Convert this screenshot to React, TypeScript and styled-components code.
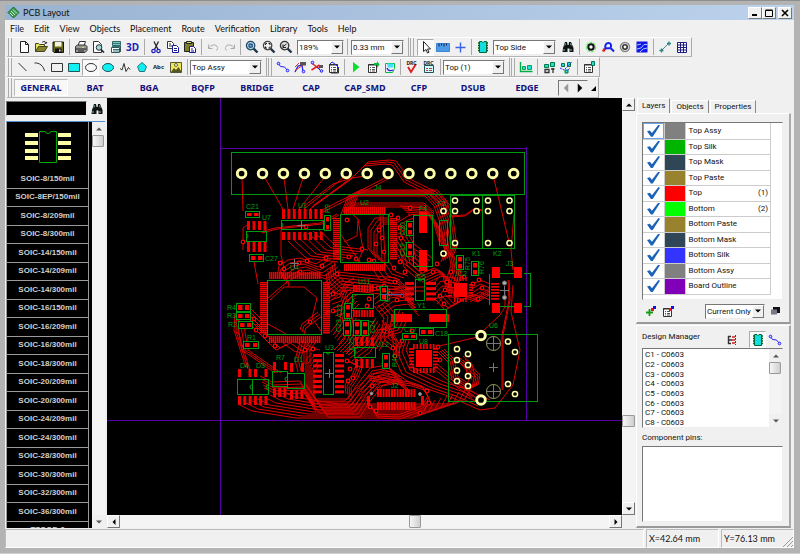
import React from 'react';
import styled, { createGlobalStyle, css } from 'styled-components';

const Global = createGlobalStyle`
  * { box-sizing: border-box; }
  html, body { margin: 0; padding: 0; }
  body { background: #b2b3b2; }
  button, input, select { font: inherit; color: inherit; margin: 0; }
`;

const UI = `Roboto, "Liberation Sans", sans-serif`;
const CHROME = `Lato, "Open Sans", sans-serif`;
const HEAVY = `"Noto Sans", "Open Sans", sans-serif`;

/* ---------- frame ---------- */

const Frame = styled.div`
  display: flex;
  flex-direction: column;
  height: 100vh;
  padding: 4px 6px 5px 5px;
  background: #b2b3b2;
  border-top: 1px solid #8e8e8e;
  border-bottom: 1px solid #d0d0d0;
  font: 8px/12px ${UI};
  color: #111;
`;
const TitleBar = styled.header`
  display: flex;
  align-items: center;
  flex: none;
  height: 15px;
  padding: 0 2px 0 2px;
  background: linear-gradient(90deg, #99b3d2, #bcd2ec);
`;
const Title = styled.h1`
  flex: 1;
  margin: 0 0 0 3px;
  font: 9px/14px ${CHROME};
`;
const raised = css`
  background: #f0f0f0;
  border: 1px solid;
  border-color: #fff #777 #777 #fff;
`;
const sunken = css`
  border: 1px solid;
  border-color: #777 #eee #eee #777;
`;
const CaptionButton = styled.button<{ $gap?: boolean }>`
  ${raised}
  display: grid;
  place-items: center;
  width: 14px;
  height: 12px;
  padding: 0;
  margin-left: ${p => (p.$gap ? 2 : 0)}px;
`;
const Client = styled.div`
  display: flex;
  flex-direction: column;
  flex: 1;
  min-height: 0;
  background: #f0f0f0;
`;
const MenuBar = styled.nav`
  display: flex;
  gap: 10px;
  height: 17px;
  flex: none;
  padding-left: 5px;
`;
const MenuItem = styled.button`
  border: 0;
  padding: 0;
  background: none;
  font: 9px/15px ${CHROME};
`;

/* ---------- toolbars ---------- */

const BarRow = styled.div<{ $h?: number }>`
  display: flex;
  flex: none;
  height: ${p => p.$h ?? 20}px;
  padding-left: 2px;
`;
const Bar = styled.div`
  display: flex;
  align-items: center;
  border-top: 1px solid #fff;
  border-right: 1px solid #aaa;
  border-bottom: 1px solid #b4b4b4;
  padding-right: 1px;
`;
const Grip = styled.span`
  width: 4px;
  margin: 0 2px 0 1px;
  align-self: stretch;
  border-left: 1px solid #aaa;
  border-right: 1px solid #aaa;
`;
const Sep = styled.span<{ $w?: number }>`
  width: ${p => p.$w ?? 6}px;
  height: 16px;
  flex: none;
  background: linear-gradient(#aaa, #aaa) center / 1px 100% no-repeat;
`;
const Gap = styled.span<{ $w: number }>`
  width: ${p => p.$w}px;
  flex: none;
`;
const Tool = styled.button<{ $on?: boolean }>`
  display: grid;
  place-items: center;
  flex: none;
  width: 17px;
  height: 17px;
  padding: 0;
  border: 1px solid transparent;
  background: none;
  ${p => p.$on && css`background: #f9f9f9; border-color: #aaa #fff #fff #aaa;`}
  svg { display: block; margin: -1px; }
`;
const Combo = styled.span<{ $w: number }>`
  ${sunken}
  display: flex;
  flex: none;
  width: ${p => p.$w}px;
  height: 15px;
  background: #fff;
`;
const ComboSelect = styled.select`
  appearance: none;
  flex: 1;
  min-width: 0;
  border: 0;
  outline: 0;
  padding: 0 0 0 1px;
  background: #fff;
  font: 8px/13px ${UI};
`;
const ComboArrow = styled.span`
  ${raised}
  display: grid;
  place-items: center;
  flex: none;
  width: 12px;
  pointer-events: none;
`;

type Dir = 'up' | 'down' | 'left' | 'right';
const ARROWS: Record<Dir, string> = {
  up: 'M1 5.5h6L4 2.5z', down: 'M1 2.5h6L4 5.5z', left: 'M5.5 1v6L2.5 4z', right: 'M2.5 1v6L5.5 4z',
};
const Arrow = ({ dir, color = '#000', size = 8 }: { dir: Dir; color?: string; size?: number }) => (
  <svg width={size} height={size} viewBox="0 0 8 8"><path d={ARROWS[dir]} fill={color} /></svg>
);
const Pick = ({ label, value, w }: { label: string; value: string; w: number }) => (
  <Combo $w={w}>
    <ComboSelect aria-label={label} defaultValue={value}><option>{value}</option></ComboSelect>
    <ComboArrow><Arrow dir="down" /></ComboArrow>
  </Combo>
);

/* ---------- icons ---------- */

const lens = (inner: React.ReactNode, fill = '#a8dce8', rim = '#234a6a') => (
  <>
    <path d="M9.5 9.5l4 4" stroke="#234" strokeWidth="2.4" />
    <circle cx="6.6" cy="6.6" r="4.2" fill={fill} stroke={rim} strokeWidth="1.3" />
    {inner}
  </>
);
const chipShape = (
  <>
    <path d="M3 4h10M3 6.5h10M3 9h10M3 11.5h10" stroke="#050" strokeWidth="1.4" />
    <path d="M4.5 2.5h2.5l1 1 1-1h2.5v11h-7z" fill="#12dce0" stroke="#063" />
  </>
);
const net = <><path d="M3.5 4.5l2 3 4 .5 3 3.5" stroke="#22f" fill="none" /><circle cx="3.5" cy="4.5" r="1.3" fill="#ccf" stroke="#22f" /><circle cx="12.5" cy="11.5" r="1.3" fill="#ccf" stroke="#22f" /></>;
const sheet = <><path d="M3.500 5.500h8v8h-8z" fill="#fff" stroke="#333" /><path d="M3 6h9" stroke="#333" /><path d="M5 8.500h1M7 8.500h3M5 10.500h1M7 10.500h3M5 12h1M7 12h3" stroke="#555" /></>;

const ICONS: Record<string, React.ReactNode> = {
  file: <path d="M4.500 2.500h5l3 3v8h-8zM9.500 2.500v3h3" fill="#fff" stroke="#222" />,
  open: <><path d="M2.500 12.500v-8h3l1 1h5v2" fill="#e4e464" stroke="#442" /><path d="M2.500 12.500l3-5h9l-3 5z" fill="#85852a" stroke="#442" /><path d="M9 3.500c2-2 4-1 4 1l-1.500-.5M13 4.500l1-1.500" fill="none" stroke="#222" /></>,
  save: <><path d="M3 3h10.500v10.500H4L3 12.500z" fill="#6b6b16" stroke="#111" /><path d="M5 3h6.500v4.500H5z" fill="#f2f2e0" /><path d="M5 9.500h6.500v4H5z" fill="#111" /><path d="M9 10.500h1.500v2H9z" fill="#ddd" /></>,
  print: <><path d="M5 7l1.500-4.500h6L11 7" fill="#fff" stroke="#333" /><path d="M2.500 7.500l2-1.500h8l1.500 1.500v4l-2 2h-9.500z" fill="#999" stroke="#333" /><path d="M3 10h10M5 12h6" stroke="#222" /><path d="M9 8.500h2" stroke="#dd5" /></>,
  preview: <><path d="M3.500 2.500h5l3 3v8h-8z" fill="#fff" stroke="#333" /><circle cx="9" cy="8.500" r="2.800" fill="#9bd8d8" stroke="#333" /><path d="M11 10.500l3 3" stroke="#222" strokeWidth="1.600" /></>,
  report: <><path d="M4.500 2.500h8v4h-8z" fill="#7bc8c8" stroke="#366" /><path d="M3.500 8.500h8v5h-8z" fill="#fff" stroke="#355" /><path d="M5 4.500h7M4 7.500h9M5 10.500h6M5 12h6" stroke="#377" /><path d="M12.500 7v6" stroke="#355" /></>,
  cut: <><path d="M6 2.500l4 8M10.500 2.500l-4 8" stroke="#222" strokeWidth="1.300" /><circle cx="5.500" cy="12" r="1.700" fill="none" stroke="#22b" strokeWidth="1.300" /><circle cx="10.500" cy="12" r="1.700" fill="none" stroke="#22b" strokeWidth="1.300" /></>,
  copy: <><path d="M2.500 2.500h4l2 2v5h-6z" fill="#fff" stroke="#333" /><path d="M4 5h2M4 7h3" stroke="#333" /><path d="M7.500 6.500h4l2 2v5h-6z" fill="#fff" stroke="#1a1a99" /><path d="M9 9.500h3M9 11.500h3" stroke="#1a1a99" /></>,
  paste: <><path d="M2.500 3.500h9v9h-9z" fill="#7d7d2c" stroke="#222" /><path d="M4.500 2.500h5v2h-5z" fill="#dd6" stroke="#222" /><path d="M7.500 7.500h4l2 2v4h-6z" fill="#fff" stroke="#1a1a99" /><path d="M9 10h2M9 12h3" stroke="#1a1a99" /></>,
  undo: <path d="M3.500 5.500v4h4M3.500 9.500c2-4 8-5 9-1 .3 1.500-.5 2.500-1.500 3" fill="none" stroke="#aaa" />,
  redo: <path d="M12.500 5.500v4h-4M12.500 9.500c-2-4-8-5-9-1-.3 1.500.5 2.500 1.500 3" fill="none" stroke="#aaa" />,
  zoomWin: lens(<path d="M5 5h3.200v3.200H5z" fill="#6ad" stroke="#236" />),
  zoomFit: lens(<path d="M4.500 6V4.500H6M7.500 4.500H9V6M9 7.500V9H7.500M6 9H4.500V7.500" fill="none" stroke="#222" />, '#f0f0f0', '#444'),
  zoomPrev: lens(<path d="M4.500 8l4-3M5 5.500v3h3" fill="none" stroke="#222" />, '#ddd', '#333'),
  pointer: <path d="M5.500 2.500v10l2.500-2 1.500 3.500 1.500-.8-1.500-3.200h3z" fill="#fff" stroke="#222" />,
  ruler: <><path d="M1.500 4.500h13v8h-13z" fill="#4b9be8" stroke="#3a86d0" /><path d="M4 4.500v3M6.500 4.500v2M9 4.500v3M11.500 4.500v2" stroke="#124" /></>,
  cross: <path d="M8.500 3.500v10M3.500 8.500h10" stroke="#3a62e8" strokeWidth="1.400" />,
  chip: chipShape,
  binoc: <><path d="M3 9l2-6h2l.6 3h1L9 3h2l2.500 6v4H9.500V9.500h-2V13H2.500z" fill="#111" /><path d="M4 10v2M11 10v2M5.500 4.500l-.7 2M10.500 4.500l.7 2" stroke="#7cc" /></>,
  pad: <><circle cx="8" cy="8" r="4.700" fill="none" stroke="#6e6" strokeWidth="1.200" strokeDasharray="3 1" /><circle cx="8" cy="8" r="2.700" fill="#fff" stroke="#111" strokeWidth="2" /></>,
  hole: <><circle cx="8" cy="8" r="4.500" fill="none" stroke="#888" strokeWidth="1.500" /><circle cx="8" cy="8" r="2.200" fill="#fff" stroke="#333" strokeWidth="1.600" /></>,
  arcA: <><path d="M3 12.500l2-3" stroke="#e22" strokeWidth="2.600" /><path d="M5.500 9.500C4.500 5.500 6.500 4 8.500 4S12 6 10.500 9zM10.500 9l3.500 3.500" fill="none" stroke="#12e" strokeWidth="2" /></>,
  pour: <><path d="M2.500 2.500h11v11h-11z" fill="#1414e6" /><path d="M3 10l4-1 3-3.500h3.500M6 13l3-3 4.500-1M3 6l4-1" fill="none" stroke="#9cf" /></>,
  dim: <><path d="M4 12l8-8" stroke="#488" /><path d="M2.500 11.500h4M4.500 9.500v4M10 4.500h4M12 2.500v4" stroke="#288" strokeWidth="1.400" /></>,
  grid: <path d="M3.500 3.500h9v10h-9zM3.500 6h9M3.500 8.500h9M3.500 11h9M6.500 3.500v10M9.500 3.500v10" fill="#fff" stroke="#1d1d84" />,
  line: <path d="M3.500 4l8 8" stroke="#333" />,
  arc: <path d="M2.500 4c5-.5 9 3 10 8" fill="none" stroke="#333" />,
  rect: <path d="M2.500 4.500h11v8h-11z" fill="none" stroke="#333" />,
  rectFill: <path d="M2.500 4.500h11v8h-11z" fill="#0ef0f4" stroke="#255" />,
  ell: <ellipse cx="8" cy="8.500" rx="5.500" ry="4" fill="none" stroke="#333" />,
  ellFill: <ellipse cx="8" cy="8.500" rx="5.500" ry="4" fill="#0ef0f4" stroke="#255" />,
  zig: <path d="M3 9.500l2 1.500 2-6.500 2 8 2.500-4 1.500 2" fill="none" stroke="#333" />,
  penta: <path d="M8 3.500l4.500 4-2 5h-5l-2-5z" fill="#0ef0f4" stroke="#277" />,
  pic: <><path d="M2.500 3.500h11v10h-11z" fill="#efe65a" stroke="#553" /><path d="M3 13l3-4 2 2 2.500-3L13 12v1z" fill="#552" /><circle cx="8" cy="6" r="1.500" fill="#fff" stroke="#663" /></>,
  net,
  unroute: <><path d="M3 13l3-6 4-1 1 7" fill="none" stroke="#22f" strokeWidth="1.300" /><path d="M3 8l4-4M4 11l7-5" stroke="#c33" /><path d="M8 3h6v3.500H8z" fill="#555" /><circle cx="11.500" cy="12.500" r="1.300" fill="#ccf" stroke="#22f" /></>,
  cutNet: <><path d="M2.500 4l8 6M2.500 11l8-5" stroke="#d22" strokeWidth="1.500" /><path d="M8 8l4 4" stroke="#22f" /><path d="M10 6h4v3h-4z" fill="#555" /><circle cx="12.500" cy="12" r="1.300" fill="#ccf" stroke="#22f" /><circle cx="3.500" cy="3.500" r="1.300" fill="#ccf" stroke="#22f" /></>,
  netSheet: <>{sheet}<path d="M3 6l3-3 3 2 4 4" fill="none" stroke="#22f" /><path d="M12.500 9v5H5" fill="none" stroke="#333" /></>,
  play: <path d="M5 3l6.500 5L5 13.500z" fill="#08e02c" />,
  runSheet: <>{sheet}<path d="M9 4h3V2l2.500 3.500L12 9V6H9z" fill="#0b3" /></>,
  flow: <><path d="M3.500 4.500h9v5l-2 4h-7z" fill="none" stroke="#0b3" /><path d="M5 4.500h6v4H6z" fill="#4df" /><path d="M5 9c1 3 4 3 6 2" fill="none" stroke="#22d" strokeWidth="1.300" /></>,
  check: <path d="M4 8l3 5 5-8" fill="none" stroke="#e21b1b" strokeWidth="1.800" />,
  checkSheet: <><path d="M3.500 6.500h9v7h-9z" fill="#cff" stroke="#255" /><path d="M5 9.500h2M8 9.500h3M5 11.500h2M8 11.500h3" stroke="#c33" /></>,
  board: <><path d="M2.500 3v9.500h12" fill="none" stroke="#0a4" strokeWidth="1.400" /><path d="M4.500 7.500h3v3h-3zM9.500 6.500h4v4h-4z" fill="#2dd" stroke="#0a4" /></>,
  place: <><path d="M3.500 5.500h4v3h-4zM9.500 3.500h4v4h-4z" fill="#2dd" stroke="#074" /><path d="M4 10.500h4v3H4zM10 10h3.500M12 9v5" fill="none" stroke="#333" strokeWidth="1.300" /></>,
  place2: <><path d="M3.500 4.500h3v3h-3zM9.500 3.500h3v4h-3z" fill="#2dd" stroke="#074" /><path d="M2 9l4 2 3-3 5-5M8 13l4-4" stroke="#22f" strokeDasharray="2 1" fill="none" /><path d="M7 11h3v3H7z" fill="#2dd" stroke="#074" /></>,
  chipSheet: <>{sheet}<path d="M10.500 2.500h3v4h-3z" fill="#2dd" stroke="#074" /></>,
  addLayer: <><path d="M3 9.500h7M6.500 6v7" stroke="#1a9a1a" strokeWidth="1.800" /><path d="M8 5h3v3H8z" fill="#e11" /><path d="M10 3h3v3h-3z" fill="#11e" /></>,
  layerSheet: <>{sheet}<path d="M9 5h3v3H9z" fill="#e11" /><path d="M11 3h3v3h-3z" fill="#11e" /></>,
  layers: <><path d="M6 4h7v6H6z" fill="#111" /><path d="M4 6.500h6v5H4z" fill="#778" /></>,
  tree: <><path d="M7 4.500H4.500v7H7M5 8h3" fill="none" stroke="#333" strokeWidth="1.400" /><path d="M8 5h3M8 8h3M8 11h3" stroke="#c22" strokeWidth="1.500" /><path d="M11.500 3v10" stroke="#444" strokeDasharray="2 1" /></>,
};
const Glyph = ({ name }: { name: string }) => <svg width="16" height="16" viewBox="0 0 16 16" fill="none">{ICONS[name]}</svg>;

const WordMark = styled.span<{ $big?: boolean; $blue?: boolean }>`
  font: ${p => (p.$big ? '700 10px/15px' : '700 6px/8px')} ${HEAVY};
  color: ${p => (p.$blue ? '#2323b4' : '#222')};
`;
const Stack = styled.span`
  display: grid;
  place-items: center;
  > * { grid-area: 1 / 1; }
  > span { align-self: start; font-size: 5px; line-height: 7px; }
`;

const T = ({ n, on, label }: { n: string; on?: boolean; label?: string }) => (
  <Tool type="button" $on={on} aria-label={label ?? n} title={label ?? n}>
    {n === '3D' ? <WordMark $big $blue>3D</WordMark>
      : n === 'Abc' ? <WordMark>Abc</WordMark>
      : n === 'check' || n === 'checkSheet' ? <Stack><Glyph name={n} /><WordMark>DRC</WordMark></Stack>
      : <Glyph name={n} />}
  </Tool>
);
const Tools = ({ names }: { names: string }) => <>{names.split(' ').map(n => <T key={n} n={n} />)}</>;

const LibTab = styled.button<{ $on?: boolean }>`
  width: 54px;
  height: 17px;
  padding: 0;
  border: 1px solid transparent;
  background: none;
  color: #10107c;
  font: 700 9px/14px ${HEAVY};
  ${p => p.$on && css`background: #f8f8f8; border-color: #bbb #fff #fff #bbb;`}
`;
const Pager = styled.span`
  ${sunken}
  display: flex;
  height: 16px;
  margin: 0 1px 0 4px;
`;
const PagerButton = styled.button`
  display: grid;
  place-items: center;
  width: 14px;
  padding: 0;
  border: 0;
  background: none;
`;

/* ---------- body ---------- */

const Main = styled.main`
  display: flex;
  flex: 1;
  min-height: 0;
`;
const Library = styled.aside`
  display: flex;
  flex-direction: column;
  flex: none;
  width: 102px;
  padding: 0 2px 0 1px;
`;
const SearchRow = styled.div`
  display: flex;
  align-items: center;
  gap: 1px;
  height: 23px;
  flex: none;
  padding-bottom: 2px;
`;
const SearchBox = styled.input`
  ${sunken}
  flex: 1;
  min-width: 0;
  height: 15px;
  background: #000;
  color: #fff;
`;
const ListPane = styled.div`
  display: flex;
  flex: 1;
  min-height: 0;
  background: #000;
  border-top: 1px solid #5592d4;
`;
const PartList = styled.ul`
  flex: 1;
  margin: 0 3px 0 0;
  padding: 0;
  list-style: none;
  overflow: hidden;
`;
const Part = styled.li<{ $first?: boolean }>`
  display: flex;
  flex-direction: column;
  align-items: center;
  justify-content: flex-end;
  height: ${p => (p.$first ? 67 : 18)}px;
  border: solid #9a9a9a;
  border-width: 0 1px 1px 1px;
  color: #cfcfcf;
  font: 700 8px/18px "Liberation Sans", sans-serif;
  &:nth-child(odd):not(:first-child) { height: 19px; }
`;
const Track = styled.div<{ $across?: boolean; $w?: number }>`
  display: flex;
  flex-direction: ${p => (p.$across ? 'row' : 'column')};
  flex: none;
  ${p => (p.$across ? 'height' : 'width')}: ${p => p.$w ?? 13}px;
  background: #f4f4f4;
`;
const TrackButton = styled.button<{ $flat?: boolean }>`
  ${raised}
  ${p => p.$flat && css`border-color: transparent;`}
  display: grid;
  place-items: center;
  flex: none;
  width: 13px;
  height: 13px;
  padding: 0;
`;
const Thumb = styled.span<{ $w?: number }>`
  flex: none;
  min-height: 12px;
  width: ${p => p.$w ?? 12}px;
  background: linear-gradient(90deg, #f6f6f6, #cfcfcf);
  border: 1px solid #999;
  border-radius: 1px;
`;
const Spring = styled.span<{ $n: number }>`
  flex: ${p => p.$n} 1 0;
`;
const Work = styled.section`
  display: grid;
  grid-template: minmax(0, 1fr) 13px / minmax(0, 1fr) 13px;
  flex: 1;
  min-width: 0;
`;
const Canvas = styled.div`
  min-width: 0;
  min-height: 0;
  overflow: hidden;
  background: #000;
  svg { display: block; width: 100%; height: 100%; }
`;

/* ---------- board drawing ---------- */

const R = '#ff0000', G = '#009a10', W = '#ffffaa', P = '#5600a4';

const shift = (pts: string, dx: number, dy: number) =>
  pts.split(' ').map(p => { const [x, y] = p.split(',').map(Number); return `${x + dx},${y + dy}`; }).join(' ');
const bundles: [string, number, number, number][] = [
  ['242,178 243,211', 1, 0, 0], ['265,178 283,209', 1, 0, 0], ['284,178 288,209', 1, 0, 0],
  ['303,178 293,209', 1, 0, 0], ['324,178 299,209', 1, 0, 0], ['343,178 304,209', 1, 0, 0],
  ['304,206 333,184 352,178 365,176', 1, 0, 0],
  ['310,209 350,180 364,166 385,164 392,165 398,173 404,182 432,196 446,209', 3, 2, -2],
  ['320,211 385,178', 2, 3, 1], ['494,179 509,242', 1, 0, 0], ['514,214 511,250 513,270', 1, 0, 0],
  ['341,214 348,196 425,196 434,206 441,225 445,252 441,262', 7, 2, -1],
  ['350,203 424,203 434,212', 3, 0, 2],
  ['400,206 424,208 434,224 440,244', 5, 2, 2],
  ['449,216 465,215 475,208 482,210', 2, 0, 1],
  ['260,232 275,228 320,223 337,214', 2, 2, 1], ['281,230 281,255 284,268', 1, 0, 0],
  ['254,262 258,284', 1, 0, 0], ['243,250 243,228 247,225', 1, 0, 0],
  ['288,241 306,258 338,262', 7, 5, -2], ['278,272 279,266 288,260 300,258 316,264 330,255', 6, 2, 3],
  ['323,284 338,272 365,275 396,278 410,290', 7, 1, 3],
  ['334,262 336,274 345,282 352,282', 5, -2, 3],
  ['392,245 402,262 420,276', 7, 2, -3], ['400,250 404,267 416,278', 5, 3, -2],
  ['398,222 408,216 414,214', 4, 0, 4],
  ['372,268 380,280 392,284', 5, 4, -2],
  ['373,300 386,290 400,288 411,300', 5, 2, 4], ['374,306 384,318 380,340 392,350', 4, 4, -1],
  ['331,300 340,297 345,283 354,278', 5, 1, 4], ['331,332 340,320 343,300 351,292', 5, 2, 3],
  ['334,350 344,340 348,330 350,316', 6, 3, 1], ['346,352 362,340 376,318', 5, 2, 3],
  ['346,360 356,365 352,375 345,385 346,394', 4, 2, 1],
  ['312,353 306,360 306,396 312,401 345,401 352,392 372,374 385,370 395,374', 5, 2, 3],
  ['304,382 316,399 348,399 356,386 370,368 386,365 400,377', 7, 2, 3],
  ['260,376 272,382 300,381 312,400', 5, 1, 3],
  ['240,405 252,411 296,418 412,418 423,413 429,402', 8, 6, -2],
  ['301,340 312,348 320,350', 4, -6, 1],
  ['235,314 234,330 246,368', 3, 2, 1], ['250,308 262,320', 5, 0, 4], ['252,326 276,350 286,345', 2, 4, -2],
  ['238,326 242,350 275,373', 3, 3, 0], ['300,342 295,360 298,372', 3, 3, -1],
  ['311,340 304,350 304,364', 3, 3, 0],
  ['370,345 378,330 392,326 400,310', 4, 3, 2],
  ['381,363 410,383 448,396 480,410 495,408 513,385 520,350 511,312 513,285', 1, 0, 0],
  ['382,320 393,340 394,356', 3, 3, 2],
  ['398,344 394,356 402,374 432,388 456,396 478,406', 4, 4, -2],
  ['439,346 478,337', 1, 0, 0], ['433,368 450,382 472,398', 3, 2, -2],
  ['438,352 448,362 452,380 465,388 472,388 474,378 459,362', 4, 2, -1],
  ['457,360 466,368 469,382', 3, 3, -2],
  ['484,330 500,315 505,307 505,290', 1, 0, 0], ['502,390 502,335 509,300 508,280', 2, 1, 0],
  ['448,250 451,265 447,278', 6, 2, 2], ['470,286 480,280 490,284', 5, 0, 4],
  ['433,284 440,276 455,278', 5, 1, 5], ['465,298 478,302 490,294', 4, 0, -2],
  ['416,276 434,268 442,272 446,288', 5, 2, 2], ['436,300 445,310 460,302', 4, 3, -2],
  ['268,298 288,281', 1, 0, 0], ['270,300 284,287 304,287 317,298 312,318 321,331', 1, 0, 0], ['268,324 286,334', 1, 0, 0],
  ['322,316 306,328 304,334', 3, -2, -2],
  ['344,242 357,236 358,219 352,214', 1, 0, 0], ['358,219 363,250 358,262', 1, 0, 0], ['341,235 360,262', 1, 0, 0],
  ['388,218 375,218 368,228 368,248 376,258', 4, 3, 2], ['380,215 382,262', 2, 3, 0],
  ['394,287 424,287', 2, 0, 4], ['373,410 378,418 400,419 424,410 430,400 424,390 412,386 370,380', 3, -1, -2],
];
const vias = [
  [243, 242], [306, 227], [347, 220], [362, 249], [374, 261], [349, 257], [356, 259], [369, 260], [280, 263], [284, 269],
  [307, 261], [299, 263], [322, 266], [337, 274], [326, 258], [300, 272], [379, 230], [382, 238], [376, 244], [384, 252],
  [391, 215], [398, 218], [401, 238], [410, 208], [400, 262], [405, 272], [394, 268], [437, 264], [447, 282], [433, 272],
  [451, 272], [473, 284], [479, 280], [482, 288], [478, 299], [440, 296], [444, 304], [384, 286], [390, 294], [397, 300],
  [402, 296], [369, 299], [367, 306], [378, 288], [310, 322], [328, 313], [333, 311], [333, 294], [254, 319], [256, 330],
  [275, 346], [305, 350], [313, 349], [265, 336], [347, 361], [350, 369], [353, 378], [348, 381], [384, 331], [372, 386],
  [370, 407], [376, 411], [412, 331], [393, 348], [395, 356], [402, 341], [438, 347], [440, 360], [429, 403], [420, 413],
  [427, 391], [445, 290], [464, 277], [400, 228], [395, 282],
];
const bigPads = Array.from({ length: 14 }, (_, i) => [241.6 + i * 20.93, 173.5]).concat([[481, 335.5], [481, 400]]);
const smallPads = [
  [455, 200.5], [476.500, 200.5], [455, 211], [476.500, 211], [455, 243], [488, 200.5], [509.500, 200.5], [488, 211], [509.500, 211],
  [488, 243], [509.500, 243], [443.500, 211], [443.500, 253.500], [457, 349], [468, 354], [457, 360], [468, 365], [457, 370.500],
  [468, 376], [457, 381], [468, 386], [508, 341.500], [515, 352], [508, 384], [515, 394],
];
const outlines: [number, number, number, number][] = [
  [231, 152, 293, 42], [246, 231, 20, 10], [281, 220, 42, 9], [340, 214, 48, 48], [267, 280, 54, 54], [352, 294, 21, 14],
  [354, 347, 21, 10], [323, 352, 10, 42], [237, 379, 15, 15], [252, 379, 16, 15], [272, 371, 15, 15], [287, 373, 17, 15],
  [450, 195, 32, 53], [482, 195, 32, 53], [439, 220, 8, 25], [413, 215, 19, 51], [415, 279, 9, 21], [394, 309, 52, 18],
  [448, 334, 89, 67],
];
/* x, y, w, h of two-pad passives */
const passives: [number, number, number, number][] = [
  [245, 211, 14, 6], [249, 254, 14, 7], [324, 215, 6, 15], [236, 303, 14, 8], [236, 312, 14, 7], [238, 321, 14, 7], [243, 341, 15, 7],
  [344, 303, 7, 15], [343, 320, 7, 15], [353, 320, 7, 15], [361, 320, 7, 15], [406, 221, 7, 14], [406, 242, 7, 14],
  [456, 255, 7, 14], [471, 261, 7, 14], [402, 333, 14, 6], [419, 328, 14, 7], [382, 353, 7, 15], [380, 286, 7, 14],
];
/* x, y, pin w, pin h, count, step x, step y */
const pins: [number, number, number, number, number, number, number][] = [
  [247, 221, 3, 9, 4, 5.5, 0], [247, 242, 3, 10, 4, 5.5, 0], [282, 209, 3, 10, 8, 5.4, 0], [282, 232, 3, 8, 8, 5.4, 0],
  [344, 207, 1.4, 7, 21, 2, 0], [344, 264, 1.4, 7, 21, 2, 0], [333, 218, 7, 1.4, 21, 0, 2], [390, 218, 7, 1.4, 21, 0, 2],
  [269, 272, 1.5, 7, 26, 2, 0], [269, 336, 1.5, 7, 26, 2, 0], [260, 282, 7, 1.5, 26, 0, 2], [323, 282, 7, 1.5, 26, 0, 2],
  [353, 285, 1.800, 7, 8, 2.700, 0], [353, 310, 1.800, 7, 8, 2.700, 0], [355, 337, 3, 9, 4, 5.3, 0], [355, 359, 3, 9, 4, 5.3, 0],
  [313, 354, 9, 3, 8, 0, 5.2], [335, 354, 9, 3, 8, 0, 5.2], [238, 369, 3, 8, 2, 10.5, 0], [254, 369, 3, 8, 2, 10.5, 0],
  [238, 396, 3, 9, 6, 5.3, 0], [273, 362, 3, 8, 2, 11, 0], [290, 363, 3, 9, 2, 11, 0], [273, 388, 3, 9, 3, 5.2, 0], [290, 390, 3, 9, 3, 5.2, 0],
  [405, 282, 9, 3, 4, 0, 5.2], [426, 282, 10, 3, 4, 0, 5.2], [413, 344, 1.800, 5, 7, 3.3, 0], [413, 368, 1.800, 5, 7, 3.3, 0],
  [409, 348, 5, 1.800, 7, 0, 3.1], [433, 348, 5, 1.800, 7, 0, 3.1], [454, 277, 1.500, 4, 5, 2.800, 0], [454, 298, 1.500, 4, 5, 2.800, 0],
  [448, 284, 4, 1.500, 5, 0, 2.700], [469, 284, 4, 1.500, 5, 0, 2.700], [377, 389, 2, 8, 14, 2.800, 0], [377, 402, 2, 8, 14, 2.800, 0],
  [491, 283, 8, 1.700, 6, 0, 3], [421, 396, 3, 9, 1, 0, 0], [367, 396, 3, 9, 1, 0, 0],
];
const solids: [number, number, number, number][] = [
  [419, 212, 8, 21], [419, 250, 8, 21], [492, 267, 8, 11], [514, 267, 8, 11], [492, 303, 8, 10], [514, 303, 8, 10],
  [454, 283, 13, 14], [391, 314, 21, 8], [429, 314, 20, 8], [416, 350, 16, 17],
];
const marks: [string, number, number, number?][] = [
  ['J4', 374, 190], ['C21', 246, 209], ['U7', 262, 220], ['U1', 298, 208], ['R9', 330, 213, 1], ['U2', 360, 205], ['C27', 265, 261],
  ['U4', 290, 270], ['U11', 358, 284], ['F4', 419, 211], ['F2', 438, 206], ['C20', 405, 235, 1], ['C19', 405, 256, 1], ['K1', 472, 256],
  ['K2', 493, 256], ['R75', 470, 270, 1], ['R76', 484, 274, 1], ['IC2', 456, 276], ['J3', 506, 266], ['IC5', 415, 279], ['R4', 227, 310],
  ['R3', 227, 318], ['R2', 228, 327], ['R1', 247, 340], ['R7', 276, 360], ['D1', 294, 362], ['D4', 240, 368], ['D3', 256, 368],
  ['U3', 325, 350], ['C25', 354, 350, 1], ['C23', 341, 332, 1], ['C24', 375, 333, 1], ['C22', 342, 317, 1], ['U12', 376, 347],
  ['Y1', 417, 308], ['C17', 404, 332], ['C18', 435, 336], ['U8', 419, 344], ['R46', 397, 367, 1], ['J2', 391, 388], ['U6', 489, 328], ['C31', 390, 302, 1],
];

const Board = () => (
  <svg aria-label="PCB board">
    <g transform="translate(-107 -98)" fill="none">
      <g stroke={P} shapeRendering="crispEdges">
        <path d="M220.500 0v2000M526.500 147v273" />
        <path d="M220 148.500h307M0 420.500h3000" />
      </g>
      <g stroke="#dc0000" strokeWidth="1">
        {bundles.map(([pts, n, dx, dy], i) => Array.from({ length: n }, (_, k) => (
          <polyline key={`${i}-${k}`} points={shift(pts, k * dx, k * dy)} />
        )))}
        {vias.map(([x, y]) => <circle key={`${x},${y}`} cx={x} cy={y} r="1.800" fill="#000" stroke={R} strokeWidth="1.200" />)}
      </g>
      <g fill="#f00000">
        {pins.map(([x, y, w, h, n, sx, sy], i) => Array.from({ length: n }, (_, k) => (
          <rect key={`${i}-${k}`} x={x + k * sx} y={y + k * sy} width={w} height={h} />
        )))}
      </g>
      <g fill={R}>{solids.map(([x, y, w, h]) => <rect key={`${x},${y}`} x={x} y={y} width={w} height={h} />)}</g>
      {passives.map(([x, y, w, h]) => (
        <g key={`${x},${y}`}>
          <rect x={x + 0.5} y={y + 0.5} width={w} height={h} fill="#000" stroke={G} />
          {w > h
            ? <path d={`M${x + 2} ${y + 2}h4.500v${h - 3}h-4.500zM${x + w - 5} ${y + 2}h4.500v${h - 3}h-4.500z`} fill={R} />
            : <path d={`M${x + 2} ${y + 2}h${w - 3}v4.500h-${w - 3}zM${x + 2} ${y + h - 5}h${w - 3}v4.500h-${w - 3}z`} fill={R} />}
        </g>
      ))}
      <g stroke={G} shapeRendering="crispEdges">
        {outlines.map(([x, y, w, h]) => <rect key={`${x},${y}`} x={x + 0.5} y={y + 0.5} width={w} height={h} />)}
        <path d="M489.500 274v31M500 273.500h14M524 273.500h6.500v33h-6.500M500 306.500h14" />
      </g>
      <g stroke={G}>
        <path d="M246 234a2 2 0 0 1 0 4M281 223a2 2 0 0 1 0 4M352 299a2 2 0 0 1 0 4M354 350a2 2 0 0 1 0 4M326 352a2 2 0 0 0 4 0M252 385a2 2 0 0 0 0 4M268 385a2 2 0 0 0 0 4M287 377a2 2 0 0 0 0 4M418 279a2 2 0 0 0 4 0" />
      </g>
      <g fill="#00a014" fontFamily='"Liberation Sans", sans-serif' fontSize="7">
        {marks.map(([t, x, y, v]) => <text key={t} x={x} y={y} transform={v ? `rotate(-90 ${x} ${y})` : undefined}>{t}</text>)}
      </g>
      <g stroke={W} fill="#000">
        {bigPads.map(([x, y]) => <circle key={`${x},${y}`} cx={x} cy={y} r="4.300" strokeWidth="2.900" />)}
        {smallPads.map(([x, y]) => <circle key={`${x},${y}`} cx={x} cy={y} r="2.600" strokeWidth="1.500" />)}
      </g>
      <g stroke="#777">
        <circle cx="493.500" cy="343.500" r="7" stroke="#99995c" /><circle cx="493.500" cy="391.500" r="7" stroke="#99995c" />
        <path d="M486 343.500h15M493.500 336v15M486 391.500h15M493.500 384v15M489 367.500h9M493.500 363v9" />
        <path d="M297 225.500h9M301.500 221v9M290 263.500h9M294.500 259v9M325 373.500h9M329.500 369v9M500 290.500h9M504.500 286v9" />
        <circle cx="504.500" cy="283" r="2" fill="#aaa" /><circle cx="504.500" cy="297.500" r="2" fill="#aaa" /><circle cx="420" cy="394" r="1.500" fill="#aaa" /><circle cx="371.500" cy="393.500" r="1.500" fill="#aaa" />
        <path d="M381 294.500h22" stroke="#5050a0" />
      </g>
    </g>
  </svg>
);

/* ---------- right side ---------- */

const Side = styled.aside`
  display: flex;
  flex-direction: column;
  flex: none;
  width: 159px;
  padding: 0 3px 0 1px;
`;
const TabStrip = styled.div`
  display: flex;
  align-items: flex-end;
  height: 15px;
  flex: none;
  padding-left: 1px;
`;
const SideTab = styled.button<{ $on?: boolean }>`
  height: ${p => (p.$on ? 15 : 13)}px;
  padding: 0 4px;
  margin-right: 1px;
  background: #f0f0f0;
  border: solid;
  border-width: 1px 1px 0 1px;
  border-color: #fff #888 #888 #fff;
  font: 8px/12px ${UI};
`;
const Page = styled.section`
  flex: none;
  padding: 8px 6px 1px 5px;
  border: solid;
  border-width: 1px 2px 2px 1px;
  border-color: #fff #aaa #999 #fff;
`;
const LayerBox = styled.div`
  ${sunken}
  height: 178px;
  background: #fff;
`;
const LayerTable = styled.table`
  width: 128px;
  border-collapse: collapse;
  tr { height: 16px; }
  tr:nth-child(even) { height: 15px; }
  td {
    height: inherit;
    padding: 0;
    border: solid #ccc;
    border-width: 0 1px 1px 0;
    line-height: 14px;
  }
`;
const Tick = styled.input`
  appearance: none;
  display: block;
  width: 20px;
  height: 14px;
  outline: 0;
  &:checked::before {
    content: '';
    display: block;
    width: 13px;
    height: 12px;
    margin: 1px 4px;
    background: #1c63b8;
    clip-path: polygon(0 55%, 22% 48%, 38% 68%, 88% 0, 100% 6%, 44% 100%, 30% 100%);
  }
`;
const TickCell = styled.td<{ $focus?: boolean }>`
  width: 21px;
  ${p => p.$focus && css`box-shadow: inset 0 0 0 1px #6aa5e8;`}
`;
const Swatch = styled.td<{ $c: string }>`
  width: 21px;
  background: ${p => p.$c} content-box;
  && { padding: 0 0 0 1px; }
`;
const NameCell = styled.td`
  && { padding-left: 3px; border-right: 0; }
`;
const OrderCell = styled.td`
  width: 20px;
  text-align: right;
  && { padding-right: 2px; }
`;
const PageTools = styled.div`
  display: flex;
  align-items: center;
  height: 20px;
  margin-top: 1px;
`;
const Manager = styled(Page)`
  display: flex;
  flex-direction: column;
  flex: 1;
  min-height: 0;
  margin-top: 1px;
  padding: 2px 6px 4px 5px;
`;
const ManagerHead = styled.div`
  display: flex;
  align-items: flex-end;
  height: 20px;
  flex: none;
  > h2 { align-self: flex-start; line-height: 18px; }
`;
const Heading = styled.h2`
  flex: 1;
  margin: 0;
  font: 8px/12px ${UI};
`;
const ListBox = styled.div`
  ${sunken}
  display: flex;
  flex: none;
  height: 80px;
  background: #fff;
`;
const Items = styled.ul`
  flex: 1;
  margin: 0;
  padding: 1px 2px;
  list-style: none;
  overflow: hidden;
  li { height: 10px; line-height: 10px; }
  li:nth-child(3n) { height: 9px; }
`;
const PinsLabel = styled(Heading)`
  flex: none;
  height: 18px;
  line-height: 19px;
`;
const PinsBox = styled.div`
  ${sunken}
  flex: 1;
  background: #fff;
`;
const StatusBar = styled.footer`
  display: flex;
  gap: 2px;
  flex: none;
  height: 19px;
  margin-top: 1px;
  font: 9px/15px ${CHROME};
`;
const Cell = styled.span<{ $w?: number }>`
  display: flex;
  justify-content: space-between;
  flex: ${p => (p.$w ? 'none' : 1)};
  width: ${p => p.$w ?? 0}px;
  padding: 1px 0 0 2px;
  border: 1px solid;
  border-color: #bbb #fff #fff #bbb;
  svg { align-self: flex-end; }
`;

const LAYERS: [string, string, string?][] = [
  ['Top Assy', '#808080'], ['Top Silk', '#00b400'], ['Top Mask', '#2f4656'], ['Top Paste', '#98822e'], ['Top', '#ff0000', '(1)'],
  ['Bottom', '#00ff00', '(2)'], ['Bottom Paste', '#98822e'], ['Bottom Mask', '#2f4656'], ['Bottom Silk', '#3434ff'],
  ['Bottom Assy', '#808080'], ['Board Outline', '#7f00b8'],
];
const PARTS = ['8/150', '8EP/150', '8/209', '8/300', '14/150', '14/209', '14/300', '16/150', '16/209', '16/300', '18/300', '20/209', '20/300', '24/209', '24/300', '28/300', '30/300', '32/300', '36/300'];
const LIBS = ['GENERAL', 'BAT', 'BGA', 'BQFP', 'BRIDGE', 'CAP', 'CAP_SMD', 'CFP', 'DSUB', 'EDGE'];
const MENUS = ['File', 'Edit', 'View', 'Objects', 'Placement', 'Route', 'Verification', 'Library', 'Tools', 'Help'];

export default function App() {
  return (
    <>
      <Global />
      <Frame>
        <TitleBar>
          <svg width="13" height="13" viewBox="0 0 13 13">
            <path d="M6.500 1L12 6.500 6.500 12 1 6.500z" fill="#3a9a4e" stroke="#236b34" />
            <path d="M4 5l4 4M6 3.500l4 4M3 7l3 3" stroke="#cdeccd" />
          </svg>
          <Title>PCB Layout</Title>
          <CaptionButton aria-label="Minimize"><svg width="8" height="8"><path d="M1 6h5" stroke="#000" strokeWidth="2" /></svg></CaptionButton>
          <CaptionButton aria-label="Maximize"><svg width="8" height="8"><path d="M.5 1.500h7v6h-7zM.5 1h7" fill="none" stroke="#000" /></svg></CaptionButton>
          <CaptionButton $gap aria-label="Close"><svg width="8" height="8"><path d="M1 1l6 6M7 1L1 7" stroke="#000" strokeWidth="1.600" /></svg></CaptionButton>
        </TitleBar>
        <Client>
          <MenuBar>{MENUS.map(m => <MenuItem key={m}>{m}</MenuItem>)}</MenuBar>
          <BarRow>
            <Bar>
              <Grip /><Gap $w={1} /><Tools names="file open save" /><Sep /><Tools names="print preview" /><Gap $w={1} /><Tools names="report 3D" />
              <Sep /><Tools names="cut copy paste" /><Sep /><Tools names="undo redo" /><Sep $w={5} /><Tools names="zoomWin zoomFit zoomPrev" />
              <Gap $w={3} /><Pick label="Zoom" value="189%" w={47} /><Sep $w={7} /><Pick label="Grid" value="0.33 mm" w={53} /><Gap $w={3} />
            </Bar>
            <Bar>
              <Grip /><Gap $w={1} /><T n="pointer" on /><Tools names="ruler cross" /><Sep /><T n="chip" /><Gap $w={2} /><Pick label="Side" value="Top Side" w={63} />
              <Gap $w={3} /><T n="binoc" /><Sep /><Tools names="pad arcA hole pour" /><Sep /><Tools names="dim grid" />
            </Bar>
          </BarRow>
          <BarRow>
            <Bar>
              <Grip /><Tools names="line arc rect rectFill" /><T n="ell" on /><Tools names="ellFill zig penta Abc pic" /><Sep />
              <Pick label="Layer" value="Top Assy" w={72} /><Gap $w={3} />
            </Bar>
            <Bar>
              <Grip /><Tools names="net unroute cutNet netSheet" /><Sep $w={5} /><Tools names="play runSheet flow" /><Sep $w={5} /><Tools names="check checkSheet" />
              <Sep /><Pick label="Route layer" value="Top (1)" w={62} /><Gap $w={3} />
            </Bar>
            <Bar><Grip /><Tools names="board" /><Sep /><Tools names="place place2" /><Sep /><Tools names="chipSheet" /><Gap $w={1} /></Bar>
          </BarRow>
          <BarRow $h={21}>
            <Bar>
              <Grip />{LIBS.map((l, i) => <LibTab key={l} $on={i === 0}>{l}</LibTab>)}
              <Pager>
                <PagerButton aria-label="Previous libraries"><Arrow dir="left" color="#999" size={12} /></PagerButton>
                <PagerButton aria-label="Next libraries"><Arrow dir="right" size={12} /></PagerButton>
              </Pager>
              <svg width="8" height="8"><path d="M7 2v5H2z" /></svg>
            </Bar>
          </BarRow>
          <Main>
            <Library>
              <SearchRow><SearchBox aria-label="Search parts" /><T n="binoc" label="Find" /></SearchRow>
              <ListPane>
                <PartList>
                  {PARTS.map((p, i) => (
                    <Part key={p} $first={i === 0}>
                      {i === 0 && (
                        <svg width="50" height="46" viewBox="0 0 50 46">
                          <path d="M2 11h13M2 19h13M2 27h13M2 34h13M35 11h13M35 19h13M35 27h13M35 34h13" stroke="#ffffa6" strokeWidth="4" />
                          <path d="M16.500 7.500h6a2.500 2 0 0 0 5 0h6v31h-17z" fill="#000" stroke="#00a800" />
                        </svg>
                      )}
                      SOIC-{p}mil
                    </Part>
                  ))}
                  <Part>TSSOP-8</Part>
                </PartList>
                <Track>
                  <TrackButton $flat aria-label="Scroll up"><Arrow dir="up" color="#555" /></TrackButton>
                  <Thumb /><Spring $n={1} />
                  <TrackButton $flat aria-label="Scroll down"><Arrow dir="down" color="#555" /></TrackButton>
                </Track>
              </ListPane>
            </Library>
            <Work>
              <Canvas><Board /></Canvas>
              <Track>
                <TrackButton aria-label="Pan up"><Arrow dir="up" /></TrackButton>
                <Spring $n={304} /><Thumb $w={13} /><Spring $n={75} />
                <TrackButton aria-label="Pan down"><Arrow dir="down" /></TrackButton>
              </Track>
              <Track $across>
                <TrackButton aria-label="Pan left"><Arrow dir="left" /></TrackButton>
                <Spring $n={290} /><Thumb /><Spring $n={188} />
                <TrackButton aria-label="Pan right"><Arrow dir="right" /></TrackButton>
              </Track>
            </Work>
            <Side>
              <TabStrip><SideTab $on>Layers</SideTab><SideTab>Objects</SideTab><SideTab>Properties</SideTab></TabStrip>
              <Page>
                <LayerBox>
                  <LayerTable>
                    <tbody>
                      {LAYERS.map(([name, color, order], i) => (
                        <tr key={name}>
                          <TickCell $focus={i === 0}><Tick type="checkbox" defaultChecked aria-label={name} /></TickCell>
                          <Swatch $c={color} /><NameCell>{name}</NameCell><OrderCell>{order}</OrderCell>
                        </tr>
                      ))}
                    </tbody>
                  </LayerTable>
                </LayerBox>
                <PageTools>
                  <Tools names="addLayer layerSheet" /><Spring $n={1} />
                  <Pick label="Layer display" value="Current Only" w={60} /><Gap $w={1} /><T n="layers" />
                </PageTools>
              </Page>
              <Manager>
                <ManagerHead><Heading>Design Manager</Heading><T n="tree" /><Gap $w={9} /><T n="chip" on label="Components" /><T n="net" label="Nets" /></ManagerHead>
                <ListBox>
                  <Items>{[1, 2, 3, 4, 5, 6, 7, 8].map(n => <li key={n}>C{n} - C0603</li>)}</Items>
                  <Track>
                    <TrackButton $flat aria-label="Scroll up"><Arrow dir="up" color="#555" /></TrackButton>
                    <Thumb /><Spring $n={1} />
                    <TrackButton $flat aria-label="Scroll down"><Arrow dir="down" color="#555" /></TrackButton>
                  </Track>
                </ListBox>
                <PinsLabel>Component pins:</PinsLabel>
                <PinsBox />
              </Manager>
            </Side>
          </Main>
          <StatusBar>
            <Cell /><Cell $w={73}>X=42.64 mm</Cell>
            <Cell $w={73}>Y=76.13 mm<svg width="11" height="11"><path d="M1 11L11 1M5 11l6-6M9 11l2-2" stroke="#999" /></svg></Cell>
          </StatusBar>
        </Client>
      </Frame>
    </>
  );
}
